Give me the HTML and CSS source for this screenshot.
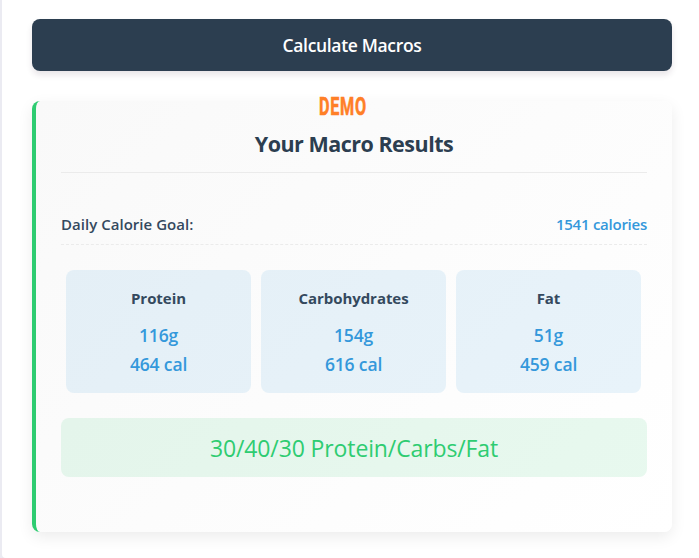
FILE: index.html
```html
<!DOCTYPE html>
<html lang="en">
<head>
<meta charset="utf-8">
<title>Macro Calculator</title>
<link rel="stylesheet" href="styles.css">
</head>
<body>
<main class="page">
  <button class="calculate" type="button">Calculate Macros</button>
  <section class="results">
    <span class="demo">DEMO</span>
    <h2 class="title">Your Macro Results</h2>
    <div class="goal">
      <span class="goal-label">Daily Calorie Goal:</span>
      <span class="goal-value">1541 calories</span>
    </div>
    <div class="macros">
      <div class="macro"><h3 class="name">Protein</h3><div class="amount">116g</div><div class="amount">464 cal</div></div>
      <div class="macro"><h3 class="name">Carbohydrates</h3><div class="amount">154g</div><div class="amount">616 cal</div></div>
      <div class="macro"><h3 class="name">Fat</h3><div class="amount">51g</div><div class="amount">459 cal</div></div>
    </div>
    <div class="ratio">30/40/30 Protein/Carbs/Fat</div>
  </section>
</main>
</body>
</html>
```
FILE: styles.css
```css
* { box-sizing: border-box; }

body {
  margin: 0;
  background: #ebebf2;
  font-family: "Open Sans", "Noto Sans", sans-serif;
  color: #34495e;
}

.page {
  height: 558px;
  margin-left: 2px;
  padding: 19px 27px 0 30px;
  background: #fff;
  border-bottom-left-radius: 4px;
  overflow: hidden;
}

.calculate {
  display: block;
  width: 100%;
  height: 52px;
  padding: 0;
  border: 0;
  border-radius: 8px;
  background: #2c3e50;
  color: #fff;
  font: 600 17.5px/53px "Open Sans", sans-serif;
  letter-spacing: -0.33px;
  box-shadow: 0 4px 6px rgba(50, 20, 50, 0.11);
}

.results {
  position: relative;
  height: 431px;
  margin-top: 30px;
  padding: 24px 25px 25px;
  border-left: 4px solid #2ecc71;
  border-radius: 8px;
  background: linear-gradient(135deg, #f9f9f9, #fff);
  box-shadow: 0 5px 15px rgba(0, 0, 0, 0.08);
}

.demo {
  position: absolute;
  left: 283px;
  top: -9px;
  color: #ff7f27;
  font: 700 26.5px/28px Roboto, sans-serif;
  letter-spacing: 1.2px;
  -webkit-text-stroke: 0.6px #ff7f27;
  transform: scaleX(0.61);
  transform-origin: 0 50%;
}

.title {
  height: 48px;
  margin: 0;
  border-bottom: 1px solid #ebebeb;
  color: #2c3e50;
  font-size: 21.5px;
  font-weight: 700;
  line-height: 38px;
  letter-spacing: -0.5px;
  text-align: center;
}

.goal {
  display: flex;
  justify-content: space-between;
  height: 40px;
  margin-top: 32px;
  border-bottom: 1px dashed #ebebeb;
  font-size: 15px;
  line-height: 39px;
}

.goal-label { font-weight: 600; letter-spacing: 0.03px; }

.goal-value { color: #3498db; font-weight: 600; letter-spacing: -0.25px; }

.macros {
  display: grid;
  grid-template-columns: repeat(3, 1fr);
  gap: 10px;
  margin: 25px 6px 0 5px;
}

.macro {
  height: 123px;
  padding-top: 14px;
  border-radius: 8px;
  background: rgba(52, 152, 219, 0.11);
  text-align: center;
}

.name {
  margin: 0 0 9px;
  font-size: 15px;
  font-weight: 700;
  line-height: 28px;
  letter-spacing: -0.05px;
}

.amount {
  color: #3498db;
  font-size: 17.5px;
  font-weight: 600;
  line-height: 29px;
  letter-spacing: -0.15px;
}

.ratio {
  height: 59px;
  margin-top: 25px;
  border-radius: 8px;
  background: rgba(46, 204, 113, 0.11);
  color: #2ecc71;
  font-size: 23px;
  line-height: 61px;
  letter-spacing: -0.12px;
  text-align: center;
}
```
